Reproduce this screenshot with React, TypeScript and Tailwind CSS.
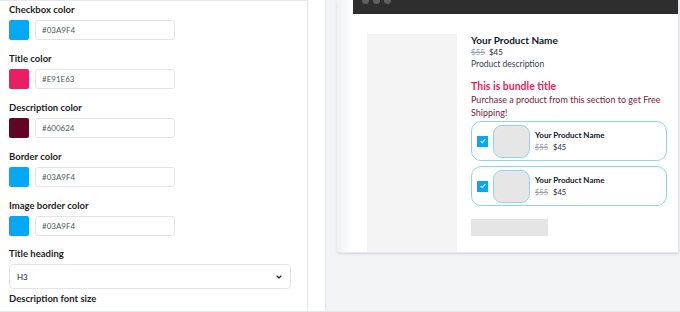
import React from 'react'

const font = { fontFamily: 'Lato, "Open Sans", sans-serif' }

const colorFields = [
  { label: 'Checkbox color', value: '#03A9F4', swatch: 'bg-[#03A9F4]' },
  { label: 'Title color', value: '#E91E63', swatch: 'bg-[#E91E63]' },
  { label: 'Description color', value: '#600624', swatch: 'bg-[#600624]' },
  { label: 'Border color', value: '#03A9F4', swatch: 'bg-[#03A9F4]' },
  { label: 'Image border color', value: '#03A9F4', swatch: 'bg-[#03A9F4]' },
]

const ColorField: React.FC<{ label: string; value: string; swatch: string }> = ({ label, value, swatch }) => (
  <div className="flex flex-col">
    <span className="text-[9.5px] leading-[14px] font-bold text-[#1e1e1e]">{label}</span>
    <div className="mt-[3px] flex items-center gap-[6px]">
      <div className={`w-[20px] h-[20px] rounded-[2px] ${swatch}`} />
      <div className="w-[140px] h-[20px] border border-[#e2e4e7] rounded-[3px] flex items-center px-[6px] text-[8px] text-[#50575e]">
        {value}
      </div>
    </div>
  </div>
)

const Settings: React.FC = () => (
  <div className="w-[308px] h-full bg-white border-r border-t border-[#e5e7eb] pl-[9px] pr-[16px] pt-[2px] flex flex-col">
    <div className="flex flex-col gap-[12px]">
      {colorFields.map((f) => (
        <ColorField key={f.label} {...f} />
      ))}
    </div>
    <span className="mt-[11px] text-[9.5px] leading-[14px] font-bold text-[#1e1e1e]">Title heading</span>
    <div className="mt-[3px] h-[25px] border border-[#e2e4e7] rounded-[4px] flex items-center justify-between px-[7px] text-[8px] text-[#1e1e1e]">
      <span>H3</span>
      <svg width="8" height="8" viewBox="0 0 24 24" fill="none" stroke="#1e1e1e" strokeWidth="3.5" strokeLinecap="round" strokeLinejoin="round">
        <path d="M6 9l6 6 6-6" />
      </svg>
    </div>
    <span className="mt-[3px] text-[9.5px] leading-[14px] font-bold text-[#1e1e1e]">Description font size</span>
  </div>
)

const Price: React.FC<{ size: string }> = ({ size }) => (
  <div className={`flex ${size}`}>
    <span className="line-through text-[#9ca3af]">$55</span>
    <span className="text-[#1f2937]">$45</span>
  </div>
)

const BundleItem: React.FC = () => (
  <div className="h-[40px] w-[196px] border-[1.5px] border-[#8fd4f8] rounded-[10px] flex items-center pl-[5px]">
    <div className="w-[11px] h-[11px] bg-[#03A9F4] flex items-center justify-center">
      <svg width="8" height="8" viewBox="0 0 12 12" fill="none" stroke="white" strokeWidth="1.6" strokeLinecap="round" strokeLinejoin="round">
        <path d="M3 6.5l2 2 4-5" />
      </svg>
    </div>
    <div className="ml-[5px] w-[37px] h-[33px] rounded-[9px] bg-[#e6e6e6] border-[1.5px] border-[#8fd4f8]" />
    <div className="ml-[5px] flex flex-col gap-[3px]">
      <span className="text-[8px] leading-[10px] font-bold text-[#111827]">Your Product Name</span>
      <Price size="text-[7.5px] leading-[10px] gap-[5px]" />
    </div>
  </div>
)

const Preview: React.FC = () => (
  <div className="flex-1 h-full bg-[#f3f4f6] pl-[11px] pr-[1px]">
    <div className="h-[253px] bg-white border-r border-b border-[#e5e7eb] shadow-sm flex">
      <div className="w-[16px] bg-gradient-to-r from-[#eef0f2] to-white" />
      <div className="flex-1 flex flex-col">
        <div className="h-[14px] bg-[#2e2e2e] flex items-start gap-[4px] pl-[9px]">
          <span className="w-[7px] h-[7px] rounded-full bg-[#5f5f5f] -mt-[3px]" />
          <span className="w-[7px] h-[7px] rounded-full bg-[#5f5f5f] -mt-[3px]" />
          <span className="w-[7px] h-[7px] rounded-full bg-[#5f5f5f] -mt-[3px]" />
        </div>
        <div className="flex-1 flex pt-[20px] pl-[14px]">
          <div className="w-[90px] bg-[#f4f4f5]" />
          <div className="ml-[14px] flex flex-col">
            <span className="text-[10px] leading-[12px] font-bold text-[#111827]">Your Product Name</span>
            <Price size="text-[8px] leading-[12px] gap-[4px]" />
            <span className="text-[8.5px] leading-[12px] text-[#374151]">Product description</span>
            <span className="mt-[9px] text-[10.5px] leading-[14px] font-bold text-[#E91E63]">This is bundle title</span>
            <span className="text-[9px] leading-[13px] text-[#7a1a3c] w-[196px]">
              Purchase a product from this section to get Free Shipping!
            </span>
            <div className="mt-[2px] flex flex-col gap-[5px]">
              <BundleItem />
              <BundleItem />
            </div>
            <div className="mt-[13px] w-[77px] h-[17px] bg-[#e5e5e5]" />
          </div>
        </div>
      </div>
    </div>
  </div>
)

export default function App() {
  return (
    <div className="w-[680px] h-[312px] flex bg-white overflow-hidden border-b border-[#e5e7eb]" style={font}>
      <Settings />
      <div className="w-[18px] h-full bg-white border-r border-[#e5e7eb]" />
      <Preview />
    </div>
  )
}
